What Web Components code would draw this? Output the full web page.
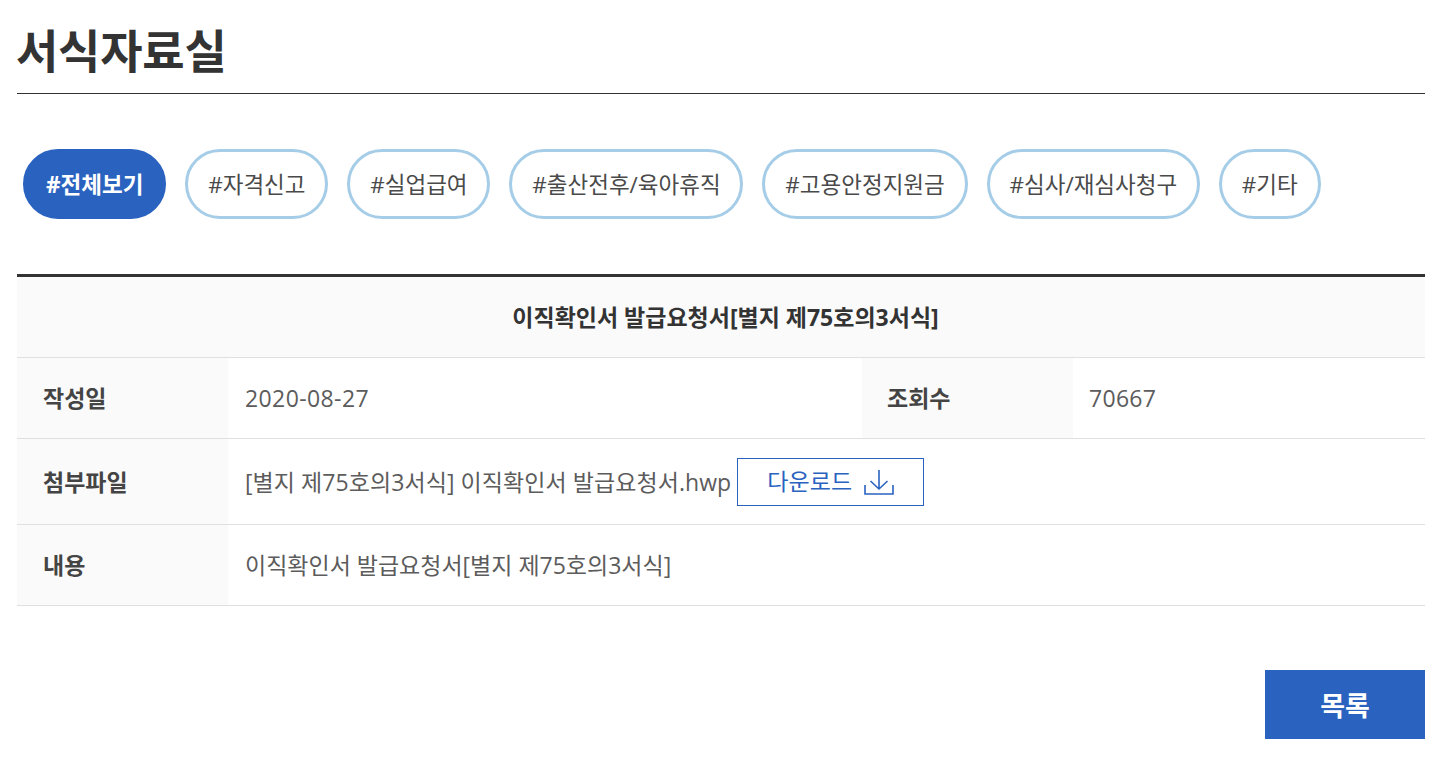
<!DOCTYPE html>
<html lang="ko"><head><meta charset="utf-8"><style>
html,body{margin:0;padding:0;background:#fff}
body{font-family:"Open Sans","Noto Sans CJK KR",sans-serif;color:#333;overflow:hidden}
</style></head><body>
<form-page>
<page-title>서식자료실</page-title>
<tag-bar>
<tag-pill active>#전체보기</tag-pill><tag-pill>#자격신고</tag-pill><tag-pill>#실업급여</tag-pill><tag-pill>#출산전후/육아휴직</tag-pill><tag-pill>#고용안정지원금</tag-pill><tag-pill>#심사/재심사청구</tag-pill><tag-pill>#기타</tag-pill>
</tag-bar>
<detail-table>
<detail-head>이직확인서 발급요청서[별지 제75호의3서식]</detail-head>
<detail-row style="--h:80px">
<detail-cell label>작성일</detail-cell><detail-cell style="width:634px;letter-spacing:.4px;padding-bottom:0">2020-08-27</detail-cell><detail-cell label style="padding-left:25px">조회수</detail-cell><detail-cell style="padding-left:16px;letter-spacing:.3px;padding-bottom:0">70667</detail-cell>
</detail-row>
<detail-row style="--h:85px">
<detail-cell label>첨부파일</detail-cell><detail-cell style="letter-spacing:.07px">[별지 제75호의3서식] 이직확인서 발급요청서.hwp<download-button>다운로드</download-button></detail-cell>
</detail-row>
<detail-row style="--h:80px">
<detail-cell label>내용</detail-cell><detail-cell>이직확인서 발급요청서[별지 제75호의3서식]</detail-cell>
</detail-row>
</detail-table>
<page-actions><list-button>목록</list-button></page-actions>
</form-page>
<script>
function def(name,css,html){customElements.define(name,class extends HTMLElement{constructor(){super();this.attachShadow({mode:'open'}).innerHTML='<style>'+css+'</style>'+(html||'<slot></slot>')}})}
def('form-page',':host{display:block;width:1408px;padding:0 19px 0 17px}');
def('page-title',':host{display:block;height:93px;border-bottom:1px solid #333;font-size:46px;font-weight:700;letter-spacing:-.2px;line-height:100px;color:#333;white-space:nowrap;text-indent:-1px}');
def('tag-bar',':host{display:flex;gap:19px;padding:55px 0 0 6px;height:180px;box-sizing:border-box}');
def('tag-pill',':host{display:flex;align-items:center;height:70px;box-sizing:border-box;padding:0 19.85px 2px;border:3px solid #a5cde8;border-radius:35px;font-size:22.5px;font-weight:400;color:#4a4a4a;white-space:nowrap;background:#fff}:host([active]){padding:0 20px 2px;background:#2a62c0;border-color:#2a62c0;color:#fff;font-weight:700}');
def('detail-table',':host{display:block;border-top:3px solid #333}');
def('detail-head',':host{display:flex;align-items:center;justify-content:center;height:78px;padding:0 0 2px 9px;background:#fafafa;border-bottom:1px solid #e0e0e0;font-size:23px;font-weight:700;color:#333}');
def('detail-row',':host{display:flex;height:var(--h);border-bottom:1px solid #e0e0e0}');
def('detail-cell',':host{display:flex;align-items:center;box-sizing:border-box;padding:0 17px 2px;font-size:23px;font-weight:400;color:#5c5c5c;white-space:nowrap}:host([label]){width:211px;flex:none;background:#fafafa;padding:0 26px 2px;font-weight:700;color:#444}');
def('download-button',':host{display:inline-flex;align-items:center;justify-content:center;gap:12px;width:187px;height:48px;box-sizing:border-box;margin:2px 0 0 6px;padding-bottom:3px;border:1px solid #2a62c0;color:#2a62c0;font-size:23px}svg{display:block;width:30px;height:30px;margin-bottom:-3px}','<slot></slot><svg viewBox="0 0 30 30" fill="none" stroke="#2a62c0" stroke-width="1.6"><path d="M15 3v19M6.500 14 15 22l8.500-8M1 18v9h28v-9"/></svg>');
def('page-actions',':host{display:flex;justify-content:flex-end;padding-top:64px}');
def('list-button',':host{display:flex;align-items:center;justify-content:center;width:160px;height:69px;background:#2a62c0;color:#fff;font-size:27px;font-weight:700}');
</script>
</body></html>
